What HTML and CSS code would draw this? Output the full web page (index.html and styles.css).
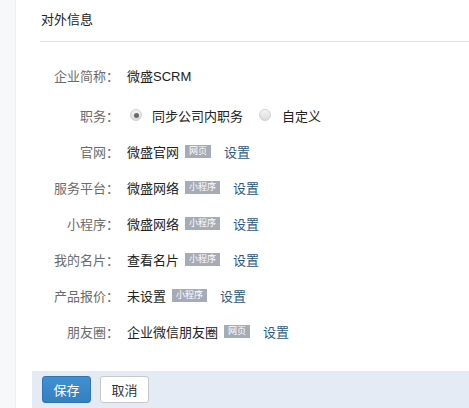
FILE: index.html
```html
<!DOCTYPE html>
<html lang="zh-CN">
<head>
<meta charset="utf-8">
<link rel="stylesheet" href="styles.css">
</head>
<body>
<div class="page">
  <aside class="side"></aside>
  <main class="main">
    <div class="header"><span class="title">对外信息</span></div>
    <div class="form">
      <div class="row first">
        <div class="label">企业简称：</div>
        <div class="value">微盛SCRM</div>
      </div>
      <div class="row">
        <div class="label">职务：</div>
        <div class="value">
          <span class="radio checked"></span><span class="radio-text">同步公司内职务</span>
          <span class="radio second"></span><span class="radio-text">自定义</span>
        </div>
      </div>
      <div class="row">
        <div class="label">官网：</div>
        <div class="value">微盛官网<span class="tag">网页</span><a class="link">设置</a></div>
      </div>
      <div class="row">
        <div class="label">服务平台：</div>
        <div class="value">微盛网络<span class="tag">小程序</span><a class="link">设置</a></div>
      </div>
      <div class="row">
        <div class="label">小程序：</div>
        <div class="value">微盛网络<span class="tag">小程序</span><a class="link">设置</a></div>
      </div>
      <div class="row">
        <div class="label">我的名片：</div>
        <div class="value">查看名片<span class="tag">小程序</span><a class="link">设置</a></div>
      </div>
      <div class="row">
        <div class="label">产品报价：</div>
        <div class="value">未设置<span class="tag">小程序</span><a class="link">设置</a></div>
      </div>
      <div class="row">
        <div class="label">朋友圈：</div>
        <div class="value">企业微信朋友圈<span class="tag">网页</span><a class="link">设置</a></div>
      </div>
    </div>
    <div class="footer">
      <button class="btn primary">保存</button>
      <button class="btn">取消</button>
    </div>
  </main>
</div>
</body>
</html>
```

FILE: styles.css
```css
html, body {
  margin: 0;
  padding: 0;
  height: 100%;
  overflow: hidden;
}
body {
  font-family: "Liberation Sans", "Noto Sans CJK SC", sans-serif;
  font-size: 13px;
  color: #333;
  background: #fff;
}
.page {
  display: flex;
  height: 408px;
}
.side {
  width: 15px;
  flex: none;
  background: #f7f8fa;
  border-right: 1px solid #eceef1;
}
.main {
  flex: 1;
  display: flex;
  flex-direction: column;
  background: #fff;
}
.header {
  height: 46px;
  margin-left: 24px;
  border-bottom: 1px solid #e3e3e3;
  display: flex;
  align-items: center;
}
.title {
  margin-left: 1px;
  margin-top: -4px;
  color: #222;
}
.form {
  padding-top: 15px;
  display: flex;
  flex-direction: column;
}
.row {
  display: flex;
  align-items: center;
  height: 36px;
}
.row.first {
  margin-bottom: 4px;
}
.label {
  width: 103px;
  text-align: right;
  color: #6b6b6b;
  flex: none;
}
.value {
  margin-left: 8px;
  display: flex;
  align-items: center;
  color: #222;
}
.radio {
  width: 10px;
  height: 10px;
  border-radius: 50%;
  border: 1px solid #cfcfcf;
  background: linear-gradient(#f4f4f4, #dcdcdc);
  display: inline-flex;
  align-items: center;
  justify-content: center;
  margin-left: 3px;
  margin-right: 10px;
}
.radio.second {
  margin-left: 16px;
  margin-right: 11px;
}
.radio.checked::after {
  content: "";
  width: 5px;
  height: 5px;
  border-radius: 50%;
  background: #6a6a6a;
}
.tag {
  display: inline-block;
  height: 13px;
  line-height: 13px;
  padding: 0 4px;
  margin-left: 6px;
  margin-right: 13px;
  background: #a5abb7;
  color: #fff;
  font-size: 9px;
}
.link {
  color: #2b5a84;
  cursor: pointer;
}
.footer {
  margin-top: 22px;
  margin-left: 16px;
  flex: 1;
  background: #e4ebf4;
  padding: 5px 10px;
  display: flex;
  align-items: flex-start;
  gap: 9px;
}
.btn {
  width: 49px;
  height: 27px;
  border: 1px solid #c8c8c8;
  border-radius: 3px;
  background: #fff;
  color: #333;
  font-family: "Liberation Sans", "Noto Sans CJK SC", sans-serif;
  font-size: 13px;
  padding: 0;
}
.btn.primary {
  background: linear-gradient(#4190d2, #347fc0);
  border-color: #2f74b3;
  color: #fff;
}
```
